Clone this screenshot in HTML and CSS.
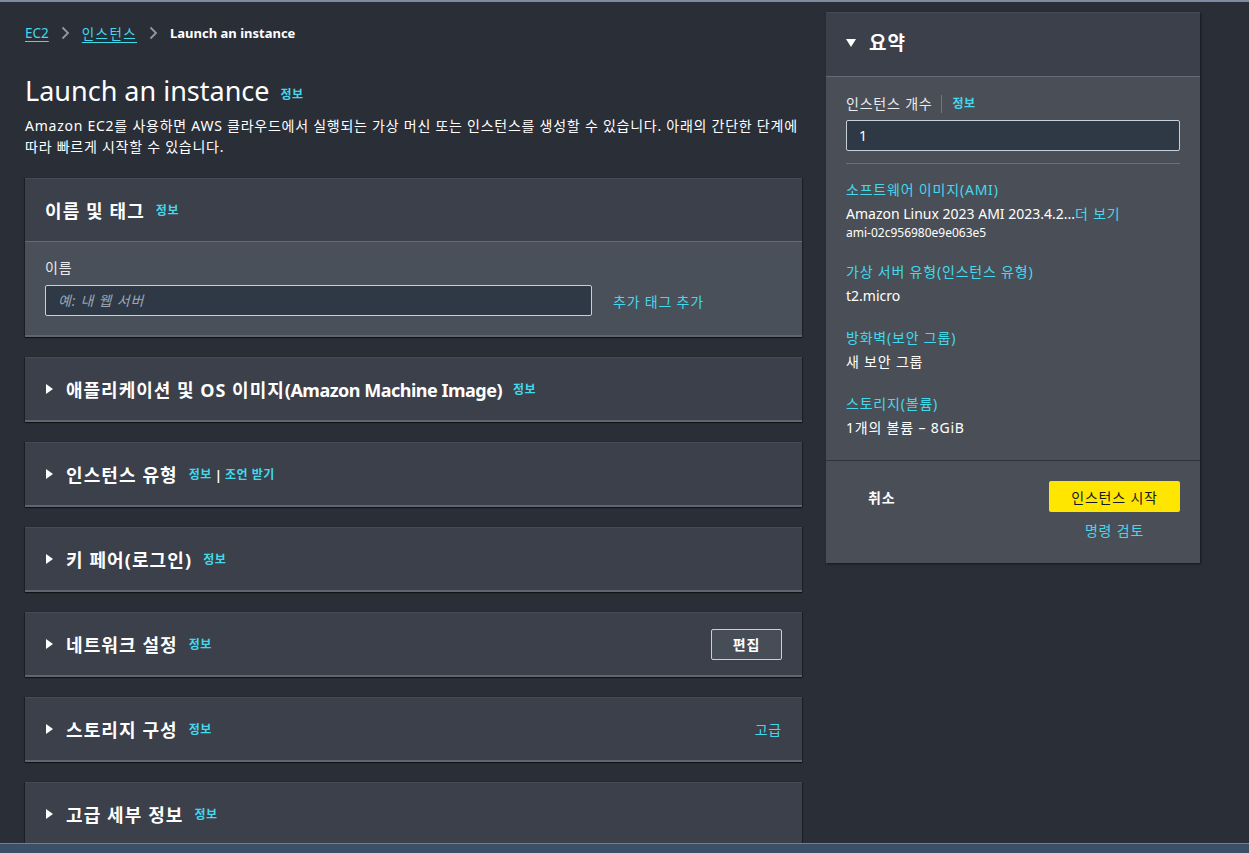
FILE: index.html
```html
<!DOCTYPE html>
<html lang="ko">
<head>
<meta charset="utf-8">
<title>Launch an instance</title>
<link rel="stylesheet" href="styles.css">
</head>
<body>
<div class="page">
  <main class="main">
    <nav class="crumbs">
      <a class="crumb-link" href="#">EC2</a>
      <svg class="chev" width="9" height="14" viewBox="0 0 9 14"><path d="M1.5 1.5 L7 7 L1.5 12.5" fill="none" stroke="#8d99a8" stroke-width="1.8"/></svg>
      <a class="crumb-link ko" href="#">인스턴스</a>
      <svg class="chev" width="9" height="14" viewBox="0 0 9 14"><path d="M1.5 1.5 L7 7 L1.5 12.5" fill="none" stroke="#8d99a8" stroke-width="1.8"/></svg>
      <span class="crumb-current">Launch an instance</span>
    </nav>
    <h1 class="title"><span>Launch an instance</span><a class="info" href="#">정보</a></h1>
    <p class="desc">Amazon EC2를 사용하면 AWS 클라우드에서 실행되는 가상 머신 또는 인스턴스를 생성할 수 있습니다. 아래의 간단한 단계에 따라 빠르게 시작할 수 있습니다.</p>

    <section class="panel first">
      <div class="panel-head open-head">
        <h2 class="panel-title">이름 및 태그</h2><a class="info" href="#">정보</a>
      </div>
      <div class="panel-body">
        <div class="field-label">이름</div>
        <div class="name-row">
          <input class="text-input name-input" type="text" placeholder="예: 내 웹 서버">
          <a class="link ko" href="#">추가 태그 추가</a>
        </div>
      </div>
    </section>

    <section class="panel">
      <div class="panel-head">
        <span class="caret"></span><h2 class="panel-title mixed">애플리케이션 및 OS 이미지<span class="latin">(Amazon Machine Image)</span></h2><a class="info" href="#">정보</a>
      </div>
    </section>

    <section class="panel">
      <div class="panel-head">
        <span class="caret"></span><h2 class="panel-title">인스턴스 유형</h2><a class="info" href="#">정보</a><span class="pipe">|</span><a class="info info-tight" href="#">조언 받기</a>
      </div>
    </section>

    <section class="panel">
      <div class="panel-head">
        <span class="caret"></span><h2 class="panel-title">키 페어(로그인)</h2><a class="info" href="#">정보</a>
      </div>
    </section>

    <section class="panel">
      <div class="panel-head">
        <span class="caret"></span><h2 class="panel-title">네트워크 설정</h2><a class="info" href="#">정보</a>
        <span class="spacer"></span>
        <button class="btn-normal">편집</button>
      </div>
    </section>

    <section class="panel">
      <div class="panel-head">
        <span class="caret"></span><h2 class="panel-title">스토리지 구성</h2><a class="info" href="#">정보</a>
        <span class="spacer"></span>
        <a class="link ko" href="#">고급</a>
      </div>
    </section>

    <section class="panel">
      <div class="panel-head">
        <span class="caret"></span><h2 class="panel-title">고급 세부 정보</h2><a class="info" href="#">정보</a>
      </div>
    </section>
  </main>

  <aside class="summary">
    <div class="summary-head">
      <span class="caret-down"></span><h2 class="summary-title">요약</h2>
    </div>
    <div class="summary-body">
      <div class="count-label"><span class="ko">인스턴스 개수</span><span class="vbar"></span><a class="info" href="#">정보</a></div>
      <input class="text-input count-input" type="text" value="1">
      <div class="divider"></div>
      <div class="group">
        <div class="group-label ko">소프트웨어 이미지(AMI)</div>
        <div class="group-value">Amazon Linux 2023 AMI 2023.4.2...<a class="link-inline" href="#">더 보기</a></div>
        <div class="group-sub">ami-02c956980e9e063e5</div>
      </div>
      <div class="group">
        <div class="group-label ko">가상 서버 유형(인스턴스 유형)</div>
        <div class="group-value">t2.micro</div>
      </div>
      <div class="group">
        <div class="group-label ko">방화벽(보안 그룹)</div>
        <div class="group-value ko">새 보안 그룹</div>
      </div>
      <div class="group last">
        <div class="group-label ko">스토리지(볼륨)</div>
        <div class="group-value ko">1개의 볼륨 – 8GiB</div>
      </div>
    </div>
    <div class="summary-foot">
      <button class="btn-link">취소</button>
      <div class="primary-col">
        <button class="btn-primary">인스턴스 시작</button>
        <a class="link review ko" href="#">명령 검토</a>
      </div>
    </div>
  </aside>
</div>
<div class="bottom-bar"></div>
</body>
</html>
```

FILE: styles.css
```css
html, body {
  margin: 0;
  padding: 0;
  height: 100%;
  overflow: hidden;
}
body {
  background: #2a2e37;
  border-top: 2px solid #7d8ba0;
  box-sizing: border-box;
  font-family: "Noto Sans", "Noto Sans CJK KR", sans-serif;
  color: #eef0f2;
  font-size: 14px;
}
a { text-decoration: none; }
.ko { letter-spacing: 0.8px; }

.page {
  display: flex;
  align-items: flex-start;
  gap: 24px;
  padding-left: 25px;
}
.main {
  width: 777px;
  flex: none;
}

/* breadcrumbs */
.crumbs {
  display: flex;
  align-items: center;
  height: 20px;
  margin-top: 21px;
  font-size: 13.5px;
}
.crumb-link {
  color: #44d8ec;
  text-decoration: underline;
  text-underline-offset: 3px;
}
.crumb-link.ko { letter-spacing: 1.4px; }
.chev { margin: 0 12px; }
.crumb-current {
  font-weight: 700;
  color: #ffffff;
  font-size: 13px;
}

/* title */
.title {
  margin: 30px 0 0;
  height: 36px;
  font-size: 27px;
  line-height: 36px;
  font-weight: 400;
  color: #ffffff;
  display: flex;
  align-items: center;
}
.info {
  color: #44d8ec;
  font-size: 12px;
  line-height: 16px;
  font-weight: 700;
  margin-left: 10px;
  letter-spacing: 0.5px;
}
.title .info { margin-left: 11px; margin-top: 7px; }
.desc {
  margin: 6px 0 0;
  line-height: 21px;
  font-size: 14px;
  color: #ffffff;
  letter-spacing: 0.75px;
}

/* panels */
.panel {
  margin-top: 20px;
  background: #3b404a;
  border-top: 1px solid #464c57;
  border-bottom: 2px solid #5f6670;
  box-shadow: 0 1px 1px rgba(0,0,0,0.55), -1px 0 1px rgba(0,0,0,0.25), 1px 0 1px rgba(0,0,0,0.25);
}
.panel.first { margin-top: 21px; }
.panel-head {
  height: 62px;
  display: flex;
  align-items: center;
  padding: 0 20px 0 21px;
}
.open-head {
  height: 63px;
  box-sizing: border-box;
  padding-left: 20px;
  border-bottom: 1px solid #666c76;
}
.panel-title {
  margin: 0;
  font-size: 18px;
  font-weight: 700;
  color: #ffffff;
  letter-spacing: 1.1px;
}
.panel-title.mixed { letter-spacing: 1px; }
.panel-title .latin { letter-spacing: -0.5px; }
.panel-title + .info { margin-left: 11px; margin-top: 2px; }
.caret {
  width: 0;
  height: 0;
  border-top: 5px solid transparent;
  border-bottom: 5px solid transparent;
  border-left: 7px solid #ffffff;
  margin-right: 13px;
}
.pipe {
  color: #ffffff;
  font-size: 13px;
  font-weight: 700;
  margin-left: 3px;
  margin-top: 2px;
}
.info-tight { margin-left: 3px; margin-top: 2px; }
.spacer { flex: 1; }
.panel-body {
  background: #495059;
  padding: 16px 20px 19px;
}
.field-label {
  line-height: 20px;
  color: #e9ebed;
  letter-spacing: 0.8px;
}
.name-row {
  margin-top: 7px;
  display: flex;
  align-items: center;
  gap: 21px;
}
.text-input {
  box-sizing: border-box;
  height: 31px;
  background: #2f3845;
  border: 1px solid #c6d0da;
  border-radius: 2px;
  color: #ffffff;
  font-family: inherit;
  font-size: 14px;
  padding: 0 12px;
  outline: none;
}
.name-input { width: 547px; }
.name-input::placeholder {
  color: #9aa6b4;
  font-style: italic;
  letter-spacing: 0.8px;
}
.link {
  color: #44d8ec;
  font-size: 14px;
}

.btn-normal {
  width: 71px;
  height: 31px;
  background: #474d56;
  border: 1px solid #c6d0da;
  border-radius: 2px;
  color: #ffffff;
  font-family: inherit;
  font-size: 14px;
  font-weight: 700;
  letter-spacing: 0.8px;
  padding: 0;
}

/* summary */
.summary {
  width: 374px;
  flex: none;
  margin-top: 10px;
  background: #3b404a;
  border-top: 1px solid #464c57;
  box-shadow: 1px 1px 2px rgba(0,0,0,0.5);
}
.summary-head {
  box-sizing: border-box;
  height: 64px;
  display: flex;
  align-items: center;
  padding: 0 0 4px 20px;
  border-bottom: 1px solid #666c76;
}
.caret-down {
  width: 0;
  height: 0;
  border-left: 5px solid transparent;
  border-right: 5px solid transparent;
  border-top: 8px solid #ffffff;
  margin-right: 13px;
}
.summary-title {
  margin: 0;
  font-size: 19px;
  line-height: 24px;
  font-weight: 700;
  color: #ffffff;
  letter-spacing: 1px;
}
.summary-body {
  background: #4a4f57;
  padding: 17px 20px 21px;
  border-bottom: 1px solid #2f333b;
}
.count-label {
  display: flex;
  align-items: center;
  line-height: 20px;
  height: 20px;
  color: #e9ebed;
}
.count-label .info { margin-left: 0; font-size: 12px; }
.vbar {
  width: 1px;
  height: 18px;
  background: #707782;
  margin: 0 11px 0 8px;
}
.count-input {
  display: block;
  width: 100%;
  margin-top: 6px;
}
.divider {
  height: 1px;
  background: #6b717a;
  margin-top: 12px;
}
.group { margin-top: 15px; }
.group + .group { margin-top: 20px; }
.group-label {
  color: #44d8ec;
  line-height: 22px;
}
.group-value {
  margin-top: 2px;
  line-height: 22px;
  color: #ffffff;
}
.link-inline { color: #44d8ec; letter-spacing: 0.8px; }
.group-sub {
  line-height: 16px;
  font-size: 12px;
  color: #ffffff;
}
.summary-foot {
  background: #4a4f57;
  padding: 20px 20px 22px;
  display: flex;
  justify-content: space-between;
  align-items: flex-start;
}
.btn-link {
  height: 31px;
  background: transparent;
  border: none;
  color: #ffffff;
  font-family: inherit;
  font-size: 14px;
  font-weight: 700;
  letter-spacing: 0.8px;
  padding: 0 22px;
}
.primary-col {
  display: flex;
  flex-direction: column;
  align-items: center;
}
.btn-primary {
  width: 131px;
  height: 31px;
  background: #ffe600;
  border: none;
  border-radius: 2px;
  color: #16191f;
  font-family: inherit;
  font-size: 14px;
  letter-spacing: 0.8px;
  padding: 0;
}
.review {
  margin-top: 9px;
  line-height: 20px;
}

.bottom-bar {
  position: fixed;
  left: 0;
  right: 0;
  bottom: 0;
  height: 9px;
  background: #3b4f66;
  border-top: 1px solid #6e8096;
}
```
